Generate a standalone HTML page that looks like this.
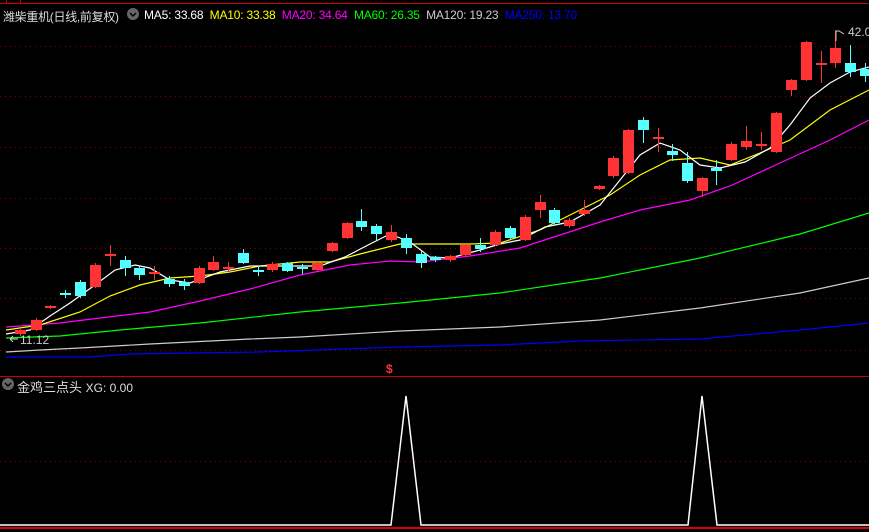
<!DOCTYPE html><html><head><meta charset="utf-8"><style>
html,body{margin:0;background:#000;width:869px;height:532px;overflow:hidden;font-family:"Liberation Sans","Noto Sans CJK SC",sans-serif}
.t{position:absolute;font-size:12px;white-space:nowrap}
</style></head><body>
<svg width="869" height="532" style="position:absolute;left:0;top:0">
<line x1="0" y1="3.5" x2="869" y2="3.5" stroke="#c00"/>
<line x1="6.5" y1="0" x2="6.5" y2="4" stroke="#c00"/><line x1="20.5" y1="0" x2="20.5" y2="4" stroke="#c00"/>
<g stroke="#800" stroke-dasharray="1,4">
<line x1="0" y1="46.5" x2="869" y2="46.5"/><line x1="0" y1="96.5" x2="869" y2="96.5"/><line x1="0" y1="147.5" x2="869" y2="147.5"/><line x1="0" y1="198.5" x2="869" y2="198.5"/><line x1="0" y1="248.5" x2="869" y2="248.5"/><line x1="0" y1="298.5" x2="869" y2="298.5"/><line x1="0" y1="350.5" x2="869" y2="350.5"/><line x1="0" y1="461.5" x2="869" y2="461.5"/>
</g>
<line x1="0" y1="376.5" x2="869" y2="376.5" stroke="#c00"/>
<line x1="0" y1="528" x2="869" y2="528" stroke="#d00" stroke-width="2"/>
<polyline fill="none" stroke="#00f" stroke-width="1.2" points="6,357 90,357 130,354 260,352 400,347 500,345 580,341 700,339 800,330 869,323"/>
<polyline fill="none" stroke="#ccc" stroke-width="1.2" points="6,352 40,350 80,348 150,344 250,339 300,337 400,331 500,327 600,320 700,308 800,293 869,278"/>
<polyline fill="none" stroke="#0f0" stroke-width="1.2" points="6,338 60,336 120,330 200,323 300,312 400,303 500,293 600,278 700,258 800,234 869,213"/>
<polyline fill="none" stroke="#f0f" stroke-width="1.2" points="6,327 60,323 100,318 150,312 200,301 250,289 300,275 350,265 390,261 420,262 470,256 520,248 560,235 600,222 640,210 690,200 730,186 780,163 830,140 869,120"/>
<polyline fill="none" stroke="#ff0" stroke-width="1.2" points="6,330 40,325 80,312 110,296 140,285 170,278 200,276 230,272 260,266 300,262 330,262 360,254 400,244 440,244 470,244 500,243 540,230 580,210 610,195 640,175 670,160 700,158 730,165 760,153 790,140 830,110 869,90"/>
<polyline fill="none" stroke="#fff" stroke-width="1.2" points="6,334 30,330 50,316 70,303 95,285 115,270 135,265 150,268 170,280 190,283 220,272 250,266 290,266 320,266 345,257 370,244 390,234 410,242 430,257 450,258 480,250 500,244 520,240 545,227 570,222 600,205 620,180 640,155 660,143 680,150 700,165 720,168 745,162 770,148 790,125 810,98 830,83 850,72 869,67"/>
<g id="c"></g>
<polyline fill="none" stroke="#fff" stroke-width="1.5" points="0,525 391,525 406,396 421,525 688,525 702,396 717,525 869,525"/>
<circle cx="133" cy="14" r="6" fill="#666"/><path d="M130,13 l3,3 l3,-3" stroke="#000" fill="none" stroke-width="1.5"/>
<circle cx="8" cy="384" r="6" fill="#666"/><path d="M5,383 l3,3 l3,-3" stroke="#000" fill="none" stroke-width="1.5"/>
<path d="M836,41 v-10 M836,31 l3,0 l5,3" stroke="#ccc" fill="none"/>
<path d="M18,339 l-8,0 M10,339 l3,-3 M10,339 l3,3" stroke="#ccc" fill="none"/>
</svg>
<div class="t" style="left:3px;top:8px;color:#ddd;font-size:12px;letter-spacing:-0.3px">潍柴重机(日线,前复权)</div>
<div class="t" style="left:144px;top:8px;letter-spacing:-0.2px"><span style="color:#fff">MA5: 33.68</span>&nbsp; <span style="color:#ff0">MA10: 33.38</span>&nbsp; <span style="color:#f0f">MA20: 34.64</span>&nbsp; <span style="color:#0f0">MA60: 26.35</span>&nbsp; <span style="color:#ccc">MA120: 19.23</span>&nbsp; <span style="color:#00f">MA250: 13.70</span></div>
<div class="t" style="left:17px;top:377px;color:#ddd;font-size:13px">金鸡三点头 <span style="font-size:12px">XG: 0.00</span></div>
<div class="t" style="left:20px;top:333px;color:#ccc">11.12</div>
<div class="t" style="left:848px;top:25px;color:#ccc">42.0</div>
<div class="t" style="left:386px;top:362px;color:#f33;font-weight:bold">$</div>
<script>
var d=[[20,330,334,328,336,1],[36,320,330,318,331,1],[50,306,308,305,309,1],[65,293,295,290,298,0],[80,282,296,280,298,0],[95,265,287,263,288,1],[110,254,256,245,266,1],[125,260,268,256,276,0],[139,268,275,266,280,0],[154,272,274,266,280,1],[169,279,284,276,287,0],[184,282,286,279,290,0],[199,268,283,266,284,1],[213,262,270,256,271,1],[228,267,269,262,272,1],[243,253,263,249,264,0],[258,270,272,266,276,0],[272,264,270,262,272,1],[287,263,271,262,272,0],[302,267,269,264,274,0],[317,263,270,261,271,1],[332,243,251,242,252,1],[347,223,238,222,239,1],[361,221,227,209,231,0],[376,226,234,224,240,0],[391,232,240,225,242,1],[406,238,248,234,254,0],[421,254,263,251,268,0],[435,257,260,256,262,0],[450,256,260,255,262,1],[465,245,255,244,256,1],[480,245,249,238,252,0],[495,232,245,230,246,1],[510,228,238,226,240,0],[525,217,240,215,241,1],[540,202,210,195,218,1],[554,210,223,208,226,0],[569,220,226,218,228,1],[584,210,214,200,216,1],[599,186,189,185,190,1],[613,158,176,156,178,1],[628,130,173,129,174,1],[643,120,130,117,143,0],[658,137,139,128,152,1],[672,151,155,144,161,0],[687,163,181,152,183,0],[702,178,191,177,197,1],[716,168,171,160,185,0],[731,144,160,142,161,1],[746,141,147,126,150,1],[761,144,146,132,150,1],[776,113,152,112,153,1],[791,80,90,79,96,1],[806,42,80,41,81,1],[821,63,65,51,83,1],[835,48,63,30,68,1],[850,63,72,45,77,0],[865,69,76,63,82,0]];
var s='';d.forEach(function(a){var c=a[5]?'#f33':'#5ff';s+='<line x1="'+(a[0]+.5)+'" y1="'+a[3]+'" x2="'+(a[0]+.5)+'" y2="'+a[4]+'" stroke="'+c+'"/><rect x="'+(a[0]-5)+'" y="'+a[1]+'" width="11" height="'+Math.max(2,a[2]-a[1])+'" fill="'+c+'"/>';});
document.getElementById('c').innerHTML=s;
</script>
</body></html>
